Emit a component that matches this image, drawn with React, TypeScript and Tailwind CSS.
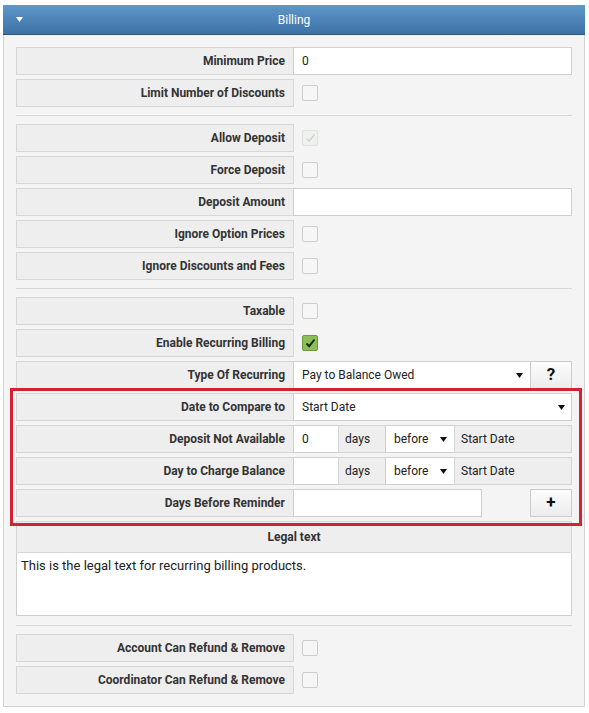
import React from 'react';

type Box = 'empty' | 'disabled' | 'checked';

const Arrow: React.FC<{ color?: string }> = ({ color = '#111' }) => (
  <svg width="7" height="5" viewBox="0 0 7 5" className="shrink-0">
    <polygon points="0,0 7,0 3.5,5" fill={color} />
  </svg>
);

const Label: React.FC<{ children: React.ReactNode }> = ({ children }) => (
  <div className="w-[278px] h-[28px] shrink-0 flex items-center justify-end pr-[8px] bg-[#eeeeee] border border-[#d6d6d6] font-bold text-[12px] text-[#333]">
    {children}
  </div>
);

const CheckBox: React.FC<{ state: Box }> = ({ state }) => {
  if (state === 'checked') {
    return (
      <div className="ml-[8px] w-[16px] h-[16px] rounded-[2px] border border-[#6a9a3c] bg-[#8cbf58] flex items-center justify-center">
        <svg width="11" height="10" viewBox="0 0 11 10">
          <path d="M1.5 5.5 L4.2 8.2 L9.5 1.5" fill="none" stroke="#1b2a10" strokeWidth="2" />
        </svg>
      </div>
    );
  }
  if (state === 'disabled') {
    return (
      <div className="ml-[8px] w-[16px] h-[16px] rounded-[2px] border border-[#e0e0e0] bg-[#f0f0f0] flex items-center justify-center">
        <svg width="11" height="10" viewBox="0 0 11 10">
          <path d="M1.5 5.5 L4.2 8.2 L9.5 1.5" fill="none" stroke="#c9d6c9" strokeWidth="1.3" />
        </svg>
      </div>
    );
  }
  return <div className="ml-[8px] w-[16px] h-[16px] rounded-[2px] border border-[#cdcdcd] bg-[#f6f6f6]" />;
};

const CheckRow: React.FC<{ label: string; state?: Box }> = ({ label, state = 'empty' }) => (
  <div className="flex items-center h-[28px]">
    <Label>{label}</Label>
    <CheckBox state={state} />
  </div>
);

const InputRow: React.FC<{ label: string; value?: string }> = ({ label, value = '' }) => (
  <div className="flex h-[28px]">
    <Label>{label}</Label>
    <div className="flex-1 -ml-px bg-white border border-[#cfcfcf] flex items-center pl-[8px] text-[12px] text-[#222]">
      {value}
    </div>
  </div>
);

const Sep = () => <div className="h-px bg-[#d8d8d8] my-[8px]" />;

const BtnBox: React.FC<{ children: React.ReactNode }> = ({ children }) => (
  <div className="w-[42px] h-[28px] shrink-0 -ml-px border border-[#cccccc] bg-gradient-to-b from-[#fdfdfd] to-[#ececec] flex items-center justify-center font-bold text-[17px] text-[#111]">
    {children}
  </div>
);

const DaysRow: React.FC<{ label: string; value?: string }> = ({ label, value = '' }) => (
  <div className="flex h-[28px] text-[12px] text-[#222]">
    <Label>{label}</Label>
    <div className="w-[46px] -ml-px bg-white border border-[#cfcfcf] flex items-center pl-[8px]">{value}</div>
    <div className="w-[48px] -ml-px bg-[#eeeeee] border border-[#d6d6d6] flex items-center pl-[6px]">days</div>
    <div className="w-[70px] -ml-px bg-white border border-[#cfcfcf] flex items-center justify-between pl-[8px] pr-[7px]">
      <span>before</span>
      <Arrow />
    </div>
    <div className="flex-1 -ml-px bg-[#eeeeee] border border-[#d6d6d6] flex items-center pl-[6px]">Start Date</div>
  </div>
);

export default function App() {
  return (
    <div className="min-h-screen bg-white pt-[5px] pl-[3px] font-['Roboto',sans-serif]">
      <div className="w-[582px]">
        <div className="relative h-[30px] bg-gradient-to-b from-[#5f97c9] to-[#3d72a7] border-b border-[#2c5680] flex items-center justify-center text-white text-[12px]">
          <div className="absolute left-[13px] top-[12px]">
            <Arrow color="#ffffff" />
          </div>
          Billing
        </div>
        <div className="bg-[#f4f4f4] border-x border-b border-[#d3d3d3] pt-[12px] pb-[12px] pl-[12px] pr-[12px]">
          <div className="flex flex-col gap-[4px]">
            <InputRow label="Minimum Price" value="0" />
            <CheckRow label="Limit Number of Discounts" />
          </div>
          <Sep />
          <div className="flex flex-col gap-[4px]">
            <CheckRow label="Allow Deposit" state="disabled" />
            <CheckRow label="Force Deposit" />
            <InputRow label="Deposit Amount" />
            <CheckRow label="Ignore Option Prices" />
            <CheckRow label="Ignore Discounts and Fees" />
          </div>
          <Sep />
          <div className="flex flex-col gap-[4px]">
            <CheckRow label="Taxable" />
            <CheckRow label="Enable Recurring Billing" state="checked" />
            <div className="flex h-[28px] text-[12px] text-[#222]">
              <Label>Type Of Recurring</Label>
              <div className="flex-1 -ml-px bg-white border border-[#cfcfcf] flex items-center justify-between pl-[8px] pr-[7px]">
                <span>Pay to Balance Owed</span>
                <Arrow />
              </div>
              <BtnBox>?</BtnBox>
            </div>
            <div className="relative flex flex-col gap-[4px]">
              <div className="absolute -top-[5px] -left-[6px] w-[572px] h-[138px] border-[3px] border-[#d42232] pointer-events-none" />
              <div className="flex h-[28px] text-[12px] text-[#222]">
                <Label>Date to Compare to</Label>
                <div className="flex-1 -ml-px bg-white border border-[#cfcfcf] flex items-center justify-between pl-[8px] pr-[6px]">
                  <span>Start Date</span>
                  <Arrow />
                </div>
              </div>
              <DaysRow label="Deposit Not Available" value="0" />
              <DaysRow label="Day to Charge Balance" />
              <div className="flex h-[28px]">
                <Label>Days Before Reminder</Label>
                <div className="w-[189px] -ml-px bg-white border border-[#cfcfcf]" />
                <div className="flex-1" />
                <BtnBox>+</BtnBox>
              </div>
            </div>
          </div>
          <div className="mt-[4px]">
            <div className="h-[32px] bg-[#eeeeee] border border-[#d6d6d6] flex items-center justify-center font-bold text-[12px] text-[#333]">
              Legal text
            </div>
            <div className="h-[63px] bg-white border-x border-b border-[#cfcfcf] pl-[4px] pt-[3px] text-[13px] text-[#222]">
              This is the legal text for recurring billing products.
            </div>
          </div>
          <div className="h-px bg-[#d8d8d8] mt-[9px] mb-[8px]" />
          <div className="flex flex-col gap-[4px]">
            <CheckRow label="Account Can Refund & Remove" />
            <CheckRow label="Coordinator Can Refund & Remove" />
          </div>
        </div>
      </div>
    </div>
  );
}
